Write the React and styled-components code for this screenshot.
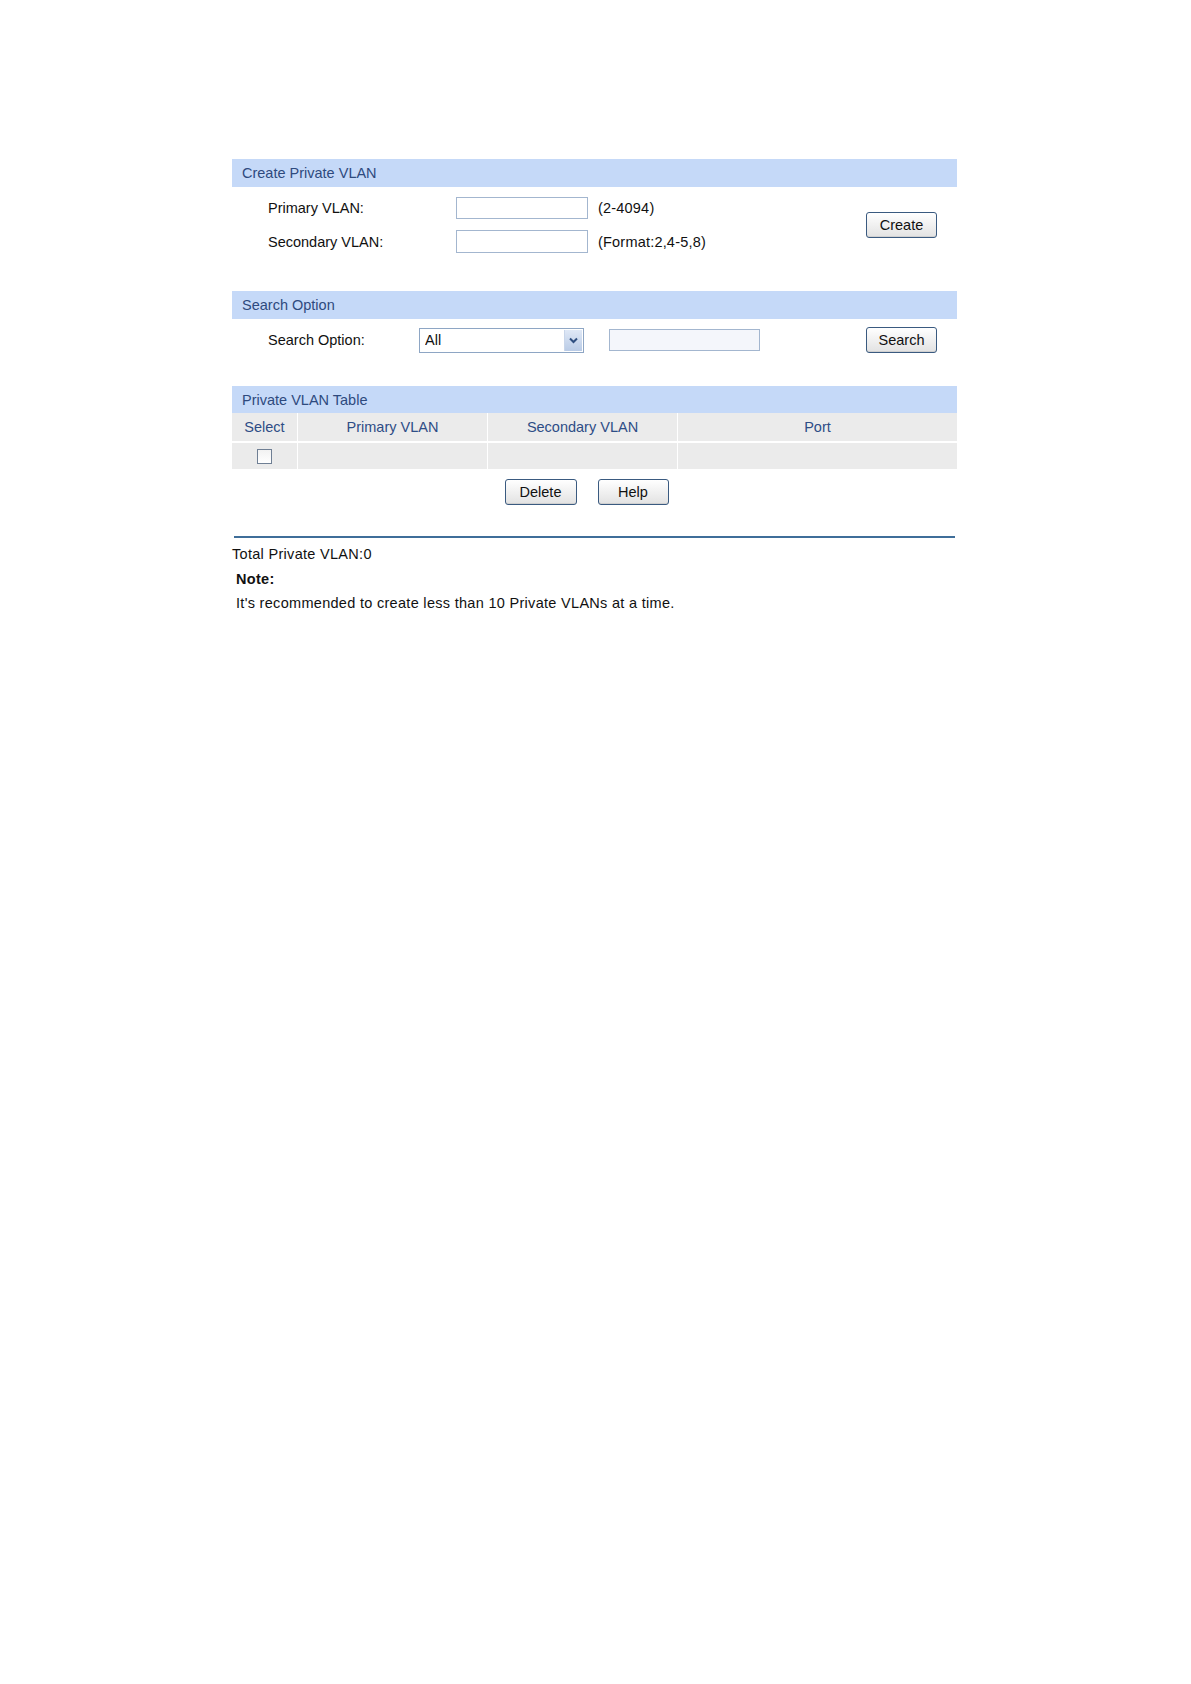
import React from 'react';
import styled, { createGlobalStyle } from 'styled-components';

const GlobalStyle = createGlobalStyle`
  html, body {
    margin: 0;
    padding: 0;
    background: #ffffff;
  }
  body {
    font-family: 'Liberation Sans', Arial, sans-serif;
    font-size: 14.5px;
    color: #111;
  }
`;

const Page = styled.div`
  width: 725px;
  padding: 159px 0 0 232px;
`;

const SectionHeader = styled.div`
  height: ${(p) => p.$height || '28px'};
  display: flex;
  align-items: center;
  padding-left: 10px;
  background: #c5d9f8;
  color: #2e4a7e;
  font-size: 14.5px;
`;

const CreateBody = styled.div`
  display: flex;
  align-items: center;
  justify-content: space-between;
  padding: 10px 20px 38px 36px;
`;

const FormGrid = styled.div`
  display: grid;
  grid-template-columns: 178px 132px auto;
  column-gap: 10px;
  row-gap: 11px;
  align-items: center;
`;

const Label = styled.span`
  color: #111;
  width: ${(p) => p.$width || 'auto'};
  flex-shrink: 0;
`;

const Hint = styled.span`
  color: #111;
  letter-spacing: 0.2px;
`;

const TextInput = styled.input`
  box-sizing: border-box;
  width: ${(p) => p.$width || '132px'};
  height: ${(p) => p.$height || '22px'};
  border: 1px solid #a3b6cf;
  background: ${(p) => p.$tint || '#ffffff'};
  margin: 0;
  padding: 0 4px;
  font: inherit;
`;

const Button = styled.button`
  box-sizing: border-box;
  width: ${(p) => p.$width || '71px'};
  height: 26px;
  border: 1px solid #3a5a80;
  border-radius: 3px;
  background: linear-gradient(#ffffff, #e2e2e2);
  box-shadow: inset 0 -1px 0 #d0d0d0;
  font-family: 'Liberation Sans', Arial, sans-serif;
  font-size: 14.5px;
  color: #111;
  padding: 0;
  cursor: pointer;
`;

const SearchBody = styled.div`
  display: flex;
  align-items: center;
  padding: 8px 20px 33px 36px;
`;

const SelectBox = styled.div`
  box-sizing: border-box;
  width: 165px;
  height: 25px;
  display: flex;
  align-items: stretch;
  border: 1px solid #8ea6c4;
  background: #fff;
  margin-right: 25px;
`;

const NativeSelect = styled.select`
  flex: 1;
  appearance: none;
  -webkit-appearance: none;
  border: none;
  outline: none;
  background: transparent;
  font: inherit;
  color: #111;
  padding: 0 5px;
  margin: 0;
`;

const ArrowBox = styled.span`
  width: 17px;
  margin: 1px;
  display: flex;
  align-items: center;
  justify-content: center;
  background: linear-gradient(#dfe8f6, #b9cbe6);
  border-left: 1px solid #c9d6ea;
`;

const Spacer = styled.div`
  flex: 1;
`;

const Table = styled.table`
  width: 100%;
  border-collapse: collapse;
  border-spacing: 0;
  background: #ebebeb;
`;

const Th = styled.th`
  width: ${(p) => p.$width || 'auto'};
  height: 28px;
  padding: 0;
  font-weight: normal;
  font-size: 14.5px;
  color: #2e4d86;
  text-align: center;
  border-left: ${(p) => (p.$first ? 'none' : '1px solid #ffffff')};
`;

const Td = styled.td`
  height: 26px;
  padding: 0;
  text-align: center;
  vertical-align: middle;
  border-top: 2px solid #ffffff;
  border-left: ${(p) => (p.$first ? 'none' : '1px solid #ffffff')};
`;

const Check = styled.input`
  appearance: none;
  -webkit-appearance: none;
  width: 15px;
  height: 15px;
  margin: 3px 0 0;
  border: 1px solid #6f7f94;
  background: linear-gradient(#f2f2f2, #ffffff);
  box-sizing: border-box;
`;

const ButtonRow = styled.div`
  display: flex;
  justify-content: center;
  gap: 21px;
  padding: 10px 16px 0 0;
`;

const Rule = styled.div`
  margin: 31px 2px 0 2px;
  height: 2px;
  background: #3f6e99;
`;

const InfoLine = styled.div`
  line-height: 18px;
  margin-top: ${(p) => p.$gap || '7px'};
  padding-left: ${(p) => p.$indent || '1px'};
  font-weight: ${(p) => (p.$bold ? 'bold' : 'normal')};
  letter-spacing: 0.3px;
  color: #111;
`;

export default function App() {
  return (
    <>
      <GlobalStyle />
      <Page>
        <SectionHeader>Create Private VLAN</SectionHeader>
        <CreateBody>
          <FormGrid>
            <Label>Primary VLAN:</Label>
            <TextInput />
            <Hint>(2-4094)</Hint>
            <Label>Secondary VLAN:</Label>
            <TextInput $height="23px" />
            <Hint>(Format:2,4-5,8)</Hint>
          </FormGrid>
          <Button>Create</Button>
        </CreateBody>

        <SectionHeader>Search Option</SectionHeader>
        <SearchBody>
          <Label $width="151px">Search Option:</Label>
          <SelectBox>
            <NativeSelect defaultValue="all">
              <option value="all">All</option>
              <option value="primary">Primary VLAN</option>
              <option value="secondary">Secondary VLAN</option>
            </NativeSelect>
            <ArrowBox>
              <svg width="9" height="7" viewBox="0 0 9 7">
                <path d="M1 1.5 L4.5 5 L8 1.5" fill="none" stroke="#2f4f80" strokeWidth="2" />
              </svg>
            </ArrowBox>
          </SelectBox>
          <TextInput $width="151px" $tint="#f4f6fb" />
          <Spacer />
          <Button>Search</Button>
        </SearchBody>

        <SectionHeader $height="27px">Private VLAN Table</SectionHeader>
        <Table>
          <thead>
            <tr>
              <Th $first $width="65px">Select</Th>
              <Th $width="189px">Primary VLAN</Th>
              <Th $width="189px">Secondary VLAN</Th>
              <Th>Port</Th>
            </tr>
          </thead>
          <tbody>
            <tr>
              <Td $first>
                <Check type="checkbox" />
              </Td>
              <Td />
              <Td />
              <Td />
            </tr>
          </tbody>
        </Table>
        <ButtonRow>
          <Button $width="72px">Delete</Button>
          <Button $width="71px">Help</Button>
        </ButtonRow>

        <Rule />
        <InfoLine $indent="0">Total Private VLAN:0</InfoLine>
        <InfoLine $bold $indent="4px">Note:</InfoLine>
        <InfoLine $gap="6px" $indent="4px">
          It's recommended to create less than 10 Private VLANs at a time.
        </InfoLine>
      </Page>
    </>
  );
}
